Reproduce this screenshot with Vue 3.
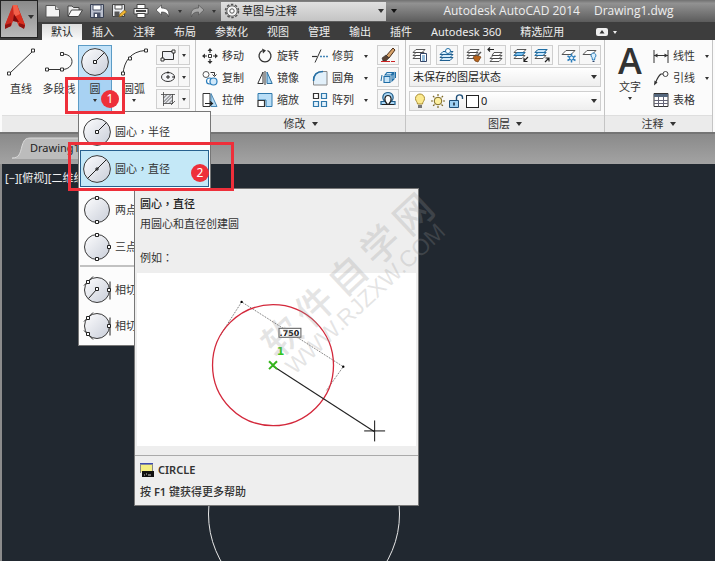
<script setup>
import { ref } from 'vue'

const quickTools = [
  { id: 'new', label: '新建' },
  { id: 'open', label: '打开' },
  { id: 'save', label: '保存' },
  { id: 'saveas', label: '另存为' },
  { id: 'print', label: '打印' }
]
const tabs = ['默认', '插入', '注释', '布局', '参数化', '视图', '管理', '输出', '插件', 'Autodesk 360', '精选应用']
const activeTab = ref('默认')

const smallDraw = [
  { id: 'rect', label: '矩形' },
  { id: 'ellipse', label: '椭圆' },
  { id: 'hatch', label: '图案填充' }
]
const modify = [
  { id: 'move', label: '移动' },
  { id: 'rotate', label: '旋转' },
  { id: 'trim', label: '修剪', more: true },
  { id: 'copy', label: '复制' },
  { id: 'mirror', label: '镜像' },
  { id: 'fillet', label: '圆角', more: true },
  { id: 'stretch', label: '拉伸' },
  { id: 'scale', label: '缩放' },
  { id: 'array', label: '阵列', more: true }
]
const modifySide = [
  { id: 'erase', label: '删除' },
  { id: 'explode', label: '分解' },
  { id: 'offset', label: '偏移' }
]
const layerGroups = [['layerprops'], ['layerstate'], ['layermatch', 'layerprev'], ['layeriso', 'layeruniso'], ['layerfreeze', 'layeroff']]
const annotate = [
  { id: 'linear', label: '线性', more: true },
  { id: 'leader', label: '引线', more: true },
  { id: 'table', label: '表格' }
]
const circleMenu = [
  { id: 'c-radius', head: '圆心', tail: '半径' },
  { id: 'c-diameter', head: '圆心', tail: '直径', selected: true },
  { id: 'c-two', head: '两点', gap: true },
  { id: 'c-three', head: '三点' },
  { id: 'c-ttr', head: '相切', tail: '相切', rule: true },
  { id: 'c-ttt', head: '相切', tail: '相切' }
]
</script>

<template>
  <div class="app">
    <svg class="defs" width="0" height="0" aria-hidden="true">
      <defs>
        <linearGradient id="ball" x1="0" y1="0" x2="1" y2="1">
          <stop offset="0" stop-color="#fdfdfe" />
          <stop offset="1" stop-color="#c9ced9" />
        </linearGradient>
        <linearGradient id="red" x1="0" y1="0" x2="1" y2="1">
          <stop offset="0" stop-color="#f0503c" />
          <stop offset="1" stop-color="#a80f10" />
        </linearGradient>
      </defs>
      <symbol id="new" viewBox="0 0 16 16">
        <path d="M1 2.500h9.500l4 4V14H1z" fill="#f4f4f4" stroke="#555" />
        <path d="M10.500 2.500v4h4" fill="#ccc" stroke="#666" />
      </symbol>
      <symbol id="open" viewBox="0 0 16 16">
        <path d="M1 13V3h4l1.500 1.500H12V7" fill="#ececec" stroke="#444" />
        <path d="M1 13.500L4.500 7H15.500L11.500 13.500z" fill="#fafafa" stroke="#444" />
      </symbol>
      <symbol id="save" viewBox="0 0 16 16">
        <path d="M1.500 1.500h13v13h-13z" fill="#b9bfcd" stroke="#384052" />
        <path d="M4 2h8v5H4z" fill="#fff" stroke="#4a5268" />
        <path d="M4.500 9.500h7V14h-7z" fill="#4a5268" /><path d="M6 11h2v3H6z" fill="#fff" />
      </symbol>
      <symbol id="saveas" viewBox="0 0 16 16">
        <path d="M1.500 1.500h12v12h-12z" fill="#e6e8ec" stroke="#444" />
        <path d="M4 2h7v4H4z" fill="#fff" stroke="#555" />
        <path d="M3.500 8.500h5v5h-5z" fill="#555" />
        <path d="M8 14l1-3 4.500-4 2 2-4.500 4z" fill="#f2b632" stroke="#7a5a1a" stroke-width=".7" />
      </symbol>
      <symbol id="print" viewBox="0 0 16 16">
        <path d="M4 1.500h8V6H4z" fill="#fff" stroke="#444" />
        <path d="M1 5.500h14V11H1z" fill="#f1f1f1" stroke="#444" />
        <path d="M3 8h10" stroke="#444" stroke-width="2" />
        <path d="M4 10.500h8v4H4z" fill="#fff" stroke="#444" />
      </symbol>
      <symbol id="undo" viewBox="0 0 16 16">
        <path d="M1 7l5.500-5v3C12 5 15 8 13.500 14 13 10.500 10.500 9 6.500 9v3z" fill="#fff" stroke="#444" stroke-width=".7" />
      </symbol>
      <symbol id="redo" viewBox="0 0 16 16">
        <path d="M15 7L9.500 2v3C4 5 1 8 2.500 14 3 10.500 5.500 9 9.500 9v3z" fill="#a9a9a9" stroke="#555" stroke-width=".7" />
      </symbol>
      <symbol id="gear" viewBox="0 0 16 16">
        <circle cx="8" cy="8" r="6.500" fill="none" stroke="#555" stroke-width="1.600" stroke-dasharray="2.500 1.600" />
        <circle cx="8" cy="8" r="5.200" fill="#f5f5f5" stroke="#555" stroke-width=".9" />
        <circle cx="8" cy="8" r="2.200" fill="#fff" stroke="#555" />
      </symbol>
      <symbol id="line" viewBox="0 0 28 28">
        <path d="M2.500 25.500L26.500 2.500" stroke="#333" />
        <path d="M1 24h3v3H1zM25 1h3v3h-3z" transform="translate(-.5 0)" fill="#fff" stroke="#333" />
      </symbol>
      <symbol id="pline" viewBox="0 0 28 28">
        <path d="M2 21.500H17C23 21.500 27 18 27 13.500S23 6 17 6" fill="none" stroke="#333" />
        <path d="M.5 20h3v3h-3zM15.500 20h3v3h-3zM15.500 4.500h3v3h-3z" fill="#fff" stroke="#333" />
      </symbol>
      <symbol id="c-radius" viewBox="0 0 28 28">
        <circle cx="14" cy="14" r="13.400" fill="url(#ball)" stroke="#3a3a3a" />
        <path d="M14 14L23.500 4.500" stroke="#222" /><path d="M12.500 12.500h3v3h-3z" fill="#fff" stroke="#222" />
      </symbol>
      <symbol id="c-diameter" viewBox="0 0 28 28">
        <circle cx="14" cy="14" r="13.400" fill="url(#ball)" stroke="#3a3a3a" />
        <path d="M4.500 23.500L23.500 4.500M12 14h4M14 12v4" stroke="#222" />
      </symbol>
      <symbol id="c-two" viewBox="0 0 28 28">
        <circle cx="14" cy="14" r="12.500" fill="url(#ball)" stroke="#3a3a3a" />
        <path d="M12.500 .5h3v3h-3zM12.500 24.500h3v3h-3z" fill="#fff" stroke="#222" />
      </symbol>
      <symbol id="c-three" viewBox="0 0 28 28">
        <circle cx="14" cy="14" r="12.500" fill="url(#ball)" stroke="#3a3a3a" />
        <path d="M12.500 .5h3v3h-3zM12.500 24.500h3v3h-3zM24.500 12.500h3v3h-3z" fill="#fff" stroke="#222" />
      </symbol>
      <symbol id="c-ttr" viewBox="0 0 28 28">
        <circle cx="14" cy="14" r="12.500" fill="url(#ball)" stroke="#3a3a3a" />
        <path d="M1 9.500L10 .5M27 5.500v18M14 13L5.500 22.500" stroke="#222" />
        <path d="M12.500 11.500h3v3h-3zM3.500 4.500h3v3h-3zM24.500 12.500h3v3h-3z" fill="#fff" stroke="#222" />
      </symbol>
      <symbol id="c-ttt" viewBox="0 0 28 28">
        <circle cx="14" cy="14" r="12.500" fill="url(#ball)" stroke="#3a3a3a" />
        <path d="M1 9.500L10 .5M27 5.500v18M1 18.500l9 9" stroke="#222" />
        <path d="M3.500 4.500h3v3h-3zM3.500 20.500h3v3h-3zM24.500 12.500h3v3h-3z" fill="#fff" stroke="#222" />
      </symbol>
      <symbol id="arc" viewBox="0 0 28 28">
        <path d="M3 26C4 13 11 3.500 25 2.500" fill="none" stroke="#333" />
        <path d="M1.500 24h3v3h-3zM8.500 9h3v3h-3zM24.500 1h3v3h-3z" fill="#fff" stroke="#333" />
      </symbol>
      <symbol id="rect" viewBox="0 0 16 16">
        <path d="M2.500 4.500h11v8h-11z" fill="#eef0f4" stroke="#333" />
        <path d="M1 11h3v3H1zM12 3h3v3h-3z" fill="#fff" stroke="#333" />
      </symbol>
      <symbol id="ellipse" viewBox="0 0 16 16">
        <ellipse cx="8" cy="8" rx="6.500" ry="4.500" fill="#f4f5f8" stroke="#333" />
        <path d="M6 8h4M8 6v4M12 8h3" stroke="#222" /><circle cx="8" cy="3.500" r="1" fill="#222" />
      </symbol>
      <symbol id="hatch" viewBox="0 0 16 16">
        <path d="M3.500 3.500h9v9h-9z" fill="#e3e5ea" />
        <path d="M1 3.500h14M3.500 1v14M12.500 3v10M3 12.500h10M3.500 7l3.500-3.500M3.500 11L11 3.500M5 12.500l7.500-7.500M9 12.500l3.500-3.500M11 14l4-4" stroke="#444" stroke-width=".8" />
      </symbol>
      <symbol id="move" viewBox="0 0 16 16">
        <path d="M8 1v4M8 11v4M1 8h4M11 8h4" stroke="#333" stroke-width="1.200" />
        <path d="M8 0l2.500 3h-5zM8 16l2.500-3h-5zM0 8l3-2.500v5zM16 8l-3-2.500v5z" fill="#333" />
        <path d="M6.500 6.500h3v3h-3z" fill="#fff" stroke="#333" />
      </symbol>
      <symbol id="rotate" viewBox="0 0 16 16">
        <path d="M5.500 2.500A6 6 0 1 0 10.500 2.500" fill="none" stroke="#333" stroke-width="1.300" />
        <path d="M5 .5l4 2-3 3z" fill="#333" />
      </symbol>
      <symbol id="trim" viewBox="0 0 16 16">
        <path d="M0 8.500h5" stroke="#333" stroke-width="1.200" /><path d="M3 14.500L9 1.500" stroke="#333" />
        <path d="M8 8.500h8" stroke="#4486b8" stroke-width="1.300" stroke-dasharray="2 1" />
      </symbol>
      <symbol id="copy" viewBox="0 0 16 16">
        <circle cx="4" cy="4.500" r="3" fill="#fff" stroke="#555" />
        <circle cx="7.500" cy="11" r="3" fill="#fff" stroke="#2b7dbb" stroke-width="1.200" />
        <circle cx="11.500" cy="11.500" r="3.500" fill="#cfe8fa" stroke="#2b7dbb" stroke-width="1.200" />
        <path d="M8.500 2.500h4v3M10.500 4.500l2 2 2-2" fill="none" stroke="#333" />
      </symbol>
      <symbol id="mirror" viewBox="0 0 16 16">
        <path d="M6 2v11.500H.8z" fill="#fff" stroke="#333" /><path d="M10 2v11.500h5.200z" fill="#a8d6f4" stroke="#2b6f9f" /><path d="M8 1v14" stroke="#333" />
      </symbol>
      <symbol id="fillet" viewBox="0 0 16 16">
        <path d="M1.500 15V10C1.500 5 5 1.500 10 1.500h5V15z" fill="#e2f0fa" stroke="#888" />
        <path d="M1.500 11C1.500 5 5 1.500 11 1.500" fill="none" stroke="#236fa6" stroke-width="1.500" />
      </symbol>
      <symbol id="stretch" viewBox="0 0 16 16">
        <path d="M1 1.500h7v13H1z" fill="#fff" stroke="#333" /><path d="M9 1.500l6 13H9z" fill="#b7dcf5" stroke="#4a88b5" /><path d="M3 11.500h7M8 9.500l2.500 2-2.500 2" fill="none" stroke="#222" stroke-width="1.200" />
      </symbol>
      <symbol id="scale" viewBox="0 0 16 16">
        <path d="M1 1.500h14v13H9V8H1z" fill="#b9def7" stroke="#2f78ab" /><path d="M1 8.500h6.500v6H1z" fill="#fff" stroke="#333" stroke-width="1.200" />
      </symbol>
      <symbol id="array" viewBox="0 0 16 16">
        <path d="M1.500 1.500h5v5h-5z" fill="#fff" stroke="#333" stroke-width="1.200" />
        <path d="M9.500 1.500h5v5h-5zM1.500 9.500h5v5h-5zM9.500 9.500h5v5h-5z" fill="#e3f2fc" stroke="#2f78ab" stroke-width="1.200" />
      </symbol>
      <symbol id="erase" viewBox="0 0 16 16">
        <path d="M6 9L13 1l2 2-6 8z" fill="#d9a46a" stroke="#4a2d18" /><path d="M2 11l4-3 3 3-3 3H3z" fill="#5a4334" stroke="#333" stroke-width=".6" />
        <path d="M1 14.500h14" stroke="#c22" stroke-dasharray="9 1" />
      </symbol>
      <symbol id="explode" viewBox="0 0 16 16">
        <path d="M4 7.500h6v6H4zM5 6l2-2.500h6L11 6zM12 6.500l2-2.500v6l-2 2z" fill="#c7e4f8" stroke="#1d6ca5" stroke-width="1.100" /><path d="M2 6l-1 6M15.500 3v6" stroke="#1d6ca5" />
      </symbol>
      <symbol id="offset" viewBox="0 0 16 16">
        <path d="M1 13.500v-3h4C1 7 3 1.500 8 1.500S15 7 11 10.500h4v3z" fill="#a9d6f5" stroke="#215f8c" stroke-width="1.200" />
        <path d="M2 13.500h5.500C3 9 5 4.500 8 4.500S13 9 8.500 13.500H14" fill="#fff" stroke="#222" stroke-width="1.200" />
      </symbol>
      <symbol id="sheets" viewBox="0 0 16 16">
        <path d="M1 11.500l3-3h8l-3 3zM1 8.500l3-3h8l-3 3zM1 5.500l3-3h9l-3 3z" fill="#fff" stroke="#444" stroke-width=".9" />
      </symbol>
      <symbol id="layerprops" viewBox="0 0 16 16">
        <use href="#sheets" /><path d="M8.500 6.500h6v8h-6z" fill="#fff" stroke="#346" /><path d="M10 9h3M10 11h3M10 13h3" stroke="#2b7dbb" />
      </symbol>
      <symbol id="layerstate" viewBox="0 0 16 16">
        <path d="M1 13.500l3-3h10l-3 3zM1 10.500l3-3h10l-3 3zM1 7.500l3-3h10l-3 3z" fill="#d6ecfa" stroke="#1f5f90" /><circle cx="9" cy="4" r="2.500" fill="#fff" stroke="#1f6ea5" />
      </symbol>
      <symbol id="layermatch" viewBox="0 0 16 16">
        <use href="#sheets" /><path d="M7 10l4-2 4 2-3 5-3-1z" fill="#b9651d" stroke="#6c3b13" stroke-width=".7" /><path d="M11 9l4-4" stroke="#555" stroke-width="1.500" />
      </symbol>
      <symbol id="layerprev" viewBox="0 0 16 16">
        <path d="M3 14.500l3-3h9l-3 3zM3 11.500l3-3h9l-3 3zM5 8.500l2-3h8l-3 3z" fill="#fff" stroke="#444" stroke-width=".9" /><path d="M7 2.500H1M3 .5l-2 2 2 2" fill="none" stroke="#222" stroke-width="1.200" />
      </symbol>
      <symbol id="layeriso" viewBox="0 0 16 16">
        <use href="#sheets" /><path d="M1 8.500l3-3h8l-3 3z" fill="#7fc1ee" stroke="#1f6ea5" /><path d="M15 10l-4 4M11 11v3.500h3.500" fill="none" stroke="#222" stroke-width="1.200" />
      </symbol>
      <symbol id="layeruniso" viewBox="0 0 16 16">
        <use href="#sheets" /><path d="M1 5.500l3-3h9l-3 3zM1 8.500l3-3h8l-3 3z" fill="#cbe6f9" stroke="#1f6ea5" /><path d="M11 15l4-4M11.500 11H15v3.500" fill="none" stroke="#222" stroke-width="1.200" />
      </symbol>
      <symbol id="layerfreeze" viewBox="0 0 16 16">
        <path d="M1 7.500l4-4h9l-4 4z" fill="#fff" stroke="#555" /><path d="M10.500 6.500v9M6.500 9l8 4.500M6.500 13.500l8-4.500" stroke="#2b7dbb" stroke-width="1.500" />
        <circle cx="10.500" cy="11" r="2" fill="#eaf6ff" stroke="#2b7dbb" />
      </symbol>
      <symbol id="layeroff" viewBox="0 0 16 16">
        <path d="M1 7.500l4-4h9l-4 4z" fill="#fff" stroke="#555" /><path d="M9 9a2.500 2.500 0 1 1 4 1.500L12.500 13h-2L10 10.500z" fill="#d8eefc" stroke="#2b7dbb" /><path d="M10.500 14.500h2" stroke="#346" />
      </symbol>
      <symbol id="bulb" viewBox="0 0 16 16">
        <path d="M5.500 11C5.500 9 3.500 8 3.500 5.500a4.500 4.500 0 0 1 9 0C12.500 8 10.500 9 10.500 11z" fill="#fbe98e" stroke="#a98d32" /><path d="M6 12h4v3H6z" fill="#777" />
      </symbol>
      <symbol id="sun" viewBox="0 0 16 16">
        <path d="M8 1v14M1 8h14M3 3l10 10M13 3L3 13" stroke="#7c6824" stroke-width="1.200" stroke-dasharray="2 1" /><circle cx="8" cy="8" r="3.800" fill="#fdf0a0" stroke="#7c6824" />
      </symbol>
      <symbol id="lock" viewBox="0 0 16 16">
        <path d="M8.500 7V4.500C8.500 1 14.500 1 14.500 4.500V6" fill="none" stroke="#1f4f78" stroke-width="1.400" /><path d="M1.500 7.500h9v7h-9z" fill="#9ed0f2" stroke="#1f4f78" /><path d="M6 9.500v3" stroke="#123" stroke-width="1.500" />
      </symbol>
      <symbol id="linear" viewBox="0 0 16 16">
        <path d="M1 2v13M15 2v13M1 7.500h14" stroke="#333" /><path d="M1 7.500l3.500-2v4zM15 7.500l-3.500-2v4z" fill="#333" />
      </symbol>
      <symbol id="leader" viewBox="0 0 16 16">
        <circle cx="12.500" cy="4" r="2.500" fill="#fff" stroke="#444" /><path d="M10 4H8C5 6 4 9 2.500 13" fill="none" stroke="#333" stroke-width="1.200" /><path d="M1 15.500l.5-5 3 2z" fill="#333" />
      </symbol>
      <symbol id="table" viewBox="0 0 16 16">
        <path d="M1 1.500h14v13H1z" fill="#fff" stroke="#333" /><path d="M1 2h14v3H1z" fill="#55677d" /><path d="M1 8.500h14M1 11.500h14M5.500 5v9.500M10.500 5v9.500" stroke="#667" />
      </symbol>
    </svg>

    <header class="header">
      <button class="logo" aria-label="应用程序菜单">
        <svg class="logo-mark" viewBox="0 0 22 26">
          <path d="M9 1h4l8 20-1 3-5-2-2-4-4-1-2 5-6 2v-3z" fill="url(#red)" />
          <path d="M9 1l1 9-3 12-6 2v-3z" fill="#cb2a20" />
          <path d="M13 1l8 20-1 3-5-2-5-12z" fill="#d9301f" />
          <path d="M9 1h4l3 9-6 3z" fill="#f2604a" />
          <path d="M10 10l5 8-6-1z" fill="#7d0b0c" />
          <path d="M15 19l6 2-1 4-5-3zM1 21l6-2v3l-6 3z" fill="#8f1211" />
        </svg>
        <i class="caret"></i>
      </button>
      <div class="titlebar">
        <nav class="quick" aria-label="快速访问">
          <button v-for="t in quickTools" :key="t.id" class="bare quick-btn" :aria-label="t.label">
            <svg class="ic16"><use :href="'#' + t.id" /></svg>
          </button>
          <button class="bare quick-btn" aria-label="放弃"><svg class="ic16"><use href="#undo" /></svg></button>
          <i class="caret small"></i>
          <button class="bare quick-btn" aria-label="重做"><svg class="ic16"><use href="#redo" /></svg></button>
          <i class="caret small"></i>
        </nav>
        <div class="workspace">
          <svg class="ic16"><use href="#gear" /></svg>
          <select aria-label="工作空间"><option>草图与注释</option></select>
          <i class="caret"></i>
        </div>
        <button class="bare custom" aria-label="自定义"><i class="caret black"></i></button>
        <div class="title"><span>Autodesk AutoCAD 2014</span><span>Drawing1.dwg</span></div>
      </div>
      <nav class="tabs" aria-label="功能区">
        <button v-for="t in tabs" :key="t" class="tab" :class="{ active: t === activeTab }" @click="activeTab = t">{{ t }}</button>
        <button class="bare minimize" aria-label="最小化"><svg viewBox="0 0 12 8"><rect width="12" height="8" rx="2" fill="#eee" /><path d="M6 2l2.500 3.500h-5z" fill="#333" /></svg><i class="caret small light"></i></button>
      </nav>
    </header>

    <section class="ribbon">
      <div class="panel draw">
        <div class="panel-body">
          <button class="big"><span class="big-icon"><svg><use href="#line" /></svg></span><span class="big-label">直线</span></button>
          <button class="big"><span class="big-icon"><svg><use href="#pline" /></svg></span><span class="big-label">多段线</span></button>
          <button class="big circle"><span class="big-icon"><svg><use href="#c-radius" /></svg></span><span class="big-label">圆<i class="caret small"></i></span></button>
          <button class="big arc"><span class="big-icon"><svg><use href="#arc" /></svg></span><span class="big-label">圆弧<i class="caret small"></i></span></button>
          <div class="stack">
            <button v-for="s in smallDraw" :key="s.id" class="split" :aria-label="s.label">
              <span><svg class="ic16"><use :href="'#' + s.id" /></svg></span><span><i class="caret small"></i></span>
            </button>
          </div>
        </div>
        <div class="panel-title"></div>
      </div>

      <div class="panel modify">
        <div class="panel-body">
          <div class="tools">
            <button v-for="m in modify" :key="m.id" class="tool"><svg class="ic16"><use :href="'#' + m.id" /></svg>{{ m.label }}<i v-if="m.more" class="caret small"></i></button>
          </div>
          <div class="stack">
            <button v-for="m in modifySide" :key="m.id" class="boxed" :aria-label="m.label"><svg class="ic16"><use :href="'#' + m.id" /></svg></button>
          </div>
        </div>
        <div class="panel-title">修改<i class="caret"></i></div>
      </div>

      <div class="panel layers">
        <div class="panel-body">
          <div class="layer-row">
            <div v-for="(g, i) in layerGroups" :key="i" class="group">
              <button v-for="id in g" :key="id" class="boxed" :aria-label="id"><svg class="ic16"><use :href="'#' + id" /></svg></button>
            </div>
          </div>
          <div class="combo">
            <select aria-label="图层状态"><option>未保存的图层状态</option></select><i class="caret"></i>
          </div>
          <div class="combo current">
            <svg class="ic16"><use href="#bulb" /></svg><svg class="ic16"><use href="#sun" /></svg><svg class="ic16"><use href="#lock" /></svg>
            <i class="swatch"></i>
            <select aria-label="当前图层"><option>0</option></select><i class="caret"></i>
          </div>
        </div>
        <div class="panel-title">图层<i class="caret"></i></div>
      </div>

      <div class="panel annotate">
        <div class="panel-body">
          <button class="big text"><span class="letter">A</span><span class="big-label">文字<i class="caret small"></i></span></button>
          <div class="tools">
            <button v-for="a in annotate" :key="a.id" class="tool"><svg class="ic16"><use :href="'#' + a.id" /></svg>{{ a.label }}<i v-if="a.more" class="caret small"></i></button>
          </div>
        </div>
        <div class="panel-title">注释<i class="caret"></i></div>
      </div>
    </section>

    <div class="files"><button class="file-tab"><svg viewBox="0 0 104 22" preserveAspectRatio="none"><path d="M0 21C7 21 8 17 10 9 12 3 13 1 19 1H104V22H0z" fill="#bcbcbc" /><path d="M0 21C7 21 8 17 10 9 12 3 13 1 19 1H104" fill="none" stroke="#d9d9d9" /></svg><span>Drawing1</span></button></div>

    <main class="canvas">
      <span class="view-label">[−][俯视][二维线框]</span>
      <svg class="drawn" viewBox="0 0 194 194"><circle cx="97" cy="97" r="95.500" fill="none" stroke="#e8e8e8" /></svg>
    </main>

    <div class="menu" role="menu">
      <button v-for="c in circleMenu" :key="c.id" role="menuitem" class="menu-item" :class="{ selected: c.selected, gap: c.gap, rule: c.rule }">
        <svg><use :href="'#' + c.id" /></svg><span>{{ c.head }}<span v-if="c.tail" class="punct">，</span>{{ c.tail }}</span>
      </button>
    </div>

    <aside class="tip" role="tooltip">
      <div class="tip-head">
        <strong>圆心<span class="punct">，</span>直径</strong>
        <p>用圆心和直径创建圆</p>
        <p class="example">例如<span class="punct">：</span></p>
      </div>
      <svg class="tip-image" viewBox="0 0 280 174">
        <path d="M84 62L105 29M207 94L190 118" stroke="#666" stroke-dasharray="1 1" />
        <path d="M105 29L207 94" stroke="#666" stroke-dasharray="1 1" />
        <circle cx="136.500" cy="92.500" r="60.700" fill="none" stroke="#d3283b" stroke-width="1.300" />
        <circle cx="105" cy="29" r="1.200" /><circle cx="207" cy="94" r="1.200" />
        <path d="M136 93L238 159" stroke="#222" stroke-width="1.100" />
        <path d="M238.500 148v21M228 158.500h21" stroke="#111" />
        <path d="M132.500 88.500l8 8M140.500 88.500l-8 8" stroke="#35b51c" stroke-width="2" />
        <rect x="142.500" y="55.500" width="22" height="9" fill="#fff" stroke="#555" />
        <text x="153" y="63" class="dim">.750</text>
        <text x="144" y="82" class="num">1</text>
      </svg>
      <div class="tip-foot">
        <strong class="cmd"><svg viewBox="0 0 14 14"><rect width="13" height="9" fill="#f4ee83" /><path d="M0 .8h13" stroke="#3d4bb0" stroke-width="1.600" /><path d="M.5 1v9M12.500 1v8" stroke="#888" /><rect x="2" y="8" width="12" height="6" fill="#111" /><path d="M4 12h1M6 11h1M8 12h3" stroke="#ccc" /></svg>CIRCLE</strong>
        <strong>按 <b>F1</b> 键获得更多帮助</strong>
      </div>
    </aside>

    <div class="watermark" aria-hidden="true">
      <div class="wm-name"><span>软</span><span>件</span><span>自</span><span>学</span><span>网</span></div>
      <div class="wm-url">WWW.RJZXW.COM</div>
    </div>

    <div class="mark first"><b>1</b></div>
    <div class="mark second"><b>2</b></div>
  </div>
</template>

<style>
body { background: #212830; }
</style>

<style scoped>
* { box-sizing: border-box; }
.app {
  position: relative;
  display: flex;
  flex-direction: column;
  min-height: 100vh;
  overflow: hidden;
  font: 11px/16px "Noto Sans", "Noto Sans CJK SC", sans-serif;
  color: #333;
  background: #212830;
}
.defs { position: absolute; }
button, select { font: inherit; color: inherit; }
button, .bare { border: 0; padding: 0; margin: 0; background: none; }
svg { display: block; flex: none; overflow: visible; }
.ic16 { width: 16px; height: 16px; }
.punct { font-family: "Noto Sans CJK TC", sans-serif; }
.caret {
  flex: none;
  width: 0;
  height: 0;
  border: 3px solid transparent;
  border-top: 4px solid #333;
  border-bottom: 0;
}
.caret.small { border-width: 3px 2px 0; }
.caret.black { border-top-color: #111; }
.caret.light { border-top-color: #eee; }

.header {
  display: grid;
  grid-template-columns: 40px 1fr;
  grid-template-rows: 22px 18px;
  background: #3d3d3d;
}
.titlebar {
  display: flex;
  align-items: center;
  grid-column: 1 / 3;
  grid-row: 1;
  padding-left: 42px;
  background: linear-gradient(#717171, #929292 15%, #5c5c5c);
}
.logo {
  z-index: 1;
  grid-column: 1;
  grid-row: 1 / 3;
  display: flex;
  align-items: center;
  justify-content: center;
  gap: 2px;
  width: 38px;
  height: 38px;
  padding-bottom: 4px;
  border: 1px solid #222;
  background: linear-gradient(#8a8a8a, #b9b9b9);
}
.logo-mark { width: 22px; height: 26px; }
.quick { display: flex; align-items: center; width: 179px; }
.quick-btn { display: grid; place-items: center; width: 22px; height: 20px; }
.quick .caret.small { margin: 0 4px; }
.workspace {
  display: flex;
  align-items: center;
  gap: 2px;
  width: 165px;
  height: 19px;
  padding: 0 2px 0 3px;
  background: linear-gradient(#e0e0e0, #c4c4c4);
}
.workspace select, .combo select {
  flex: 1;
  min-width: 0;
  height: 18px;
  padding: 0;
  border: 0;
  appearance: none;
  background: none;
  color: #222;
}
.custom { width: 16px; display: grid; place-items: center; }
.title {
  flex: 1;
  display: flex;
  justify-content: center;
  gap: 14px;
  color: #eee;
  font-size: 12px;
  font-family: "Open Sans", sans-serif;
}
.tabs {
  display: flex;
  align-items: flex-end;
  gap: 1px;
  grid-column: 2;
  grid-row: 2;
  padding-left: 2px;
  color: #eee;
}
.tab { height: 16px; padding: 0 9px; white-space: nowrap; }
.tab.active { background: linear-gradient(#dcdcdc, #fafafa); color: #222; }
.minimize { display: flex; align-items: center; gap: 5px; height: 16px; margin-left: 22px; }
.minimize svg { width: 12px; height: 8px; }

.ribbon {
  display: flex;
  padding: 0 2px;
  border-bottom: 2px solid #747474;
  background: #fbfbfb;
}
.panel { display: flex; flex-direction: column; flex: none; border-right: 1px solid #c4c4c4; }
.draw { width: 194px; }
.modify { width: 210px; }
.layers { width: 199px; }
.annotate { flex: 1; }
.panel-body { display: flex; height: 75px; padding-top: 5px; }
.panel-title {
  display: flex;
  align-items: center;
  justify-content: center;
  gap: 6px;
  height: 17px;
  background: #ebebeb;
  border-top: 1px solid #dedede;
}
.big { display: flex; flex-direction: column; width: 38px; height: 67px; }
.big.arc { width: 44px; }
.big.circle { width: 34px; border: 1px solid #5b9bc6; background: #c3e2f8; }
.big-icon { display: grid; place-items: center; width: 100%; height: 34px; }
.big-icon svg { width: 28px; height: 28px; }
.big-label {
  display: flex;
  flex-direction: column;
  align-items: center;
  width: 100%;
  padding-top: 2px;
  gap: 2px;
  white-space: nowrap;
}
.circle .big-icon { height: 32px; }
.circle .big-label { flex: 1; border-top: 1px solid #5b9bc6; background: #a8d2f3; }
.stack { display: flex; flex-direction: column; gap: 2px; }
.split, .boxed { display: flex; height: 20px; border: 1px solid #cfcfcf; background: #f7f7f7; }
.stack .split { width: 34px; }
.split span { display: grid; place-items: center; flex: 1; height: 18px; }
.split span:last-child { flex: 0 0 11px; border-left: 1px solid #cfcfcf; }
.boxed { width: 22px; align-items: center; justify-content: center; }
.tools { display: grid; grid-auto-rows: 22px; }
.modify .tools { grid-template-columns: 55px 55px 65px; padding-left: 6px; }
.annotate .tools { flex: 1; }
.tool { display: flex; align-items: center; gap: 4px; white-space: nowrap; }
.tool .caret { margin-left: 6px; }
.layers .panel-body { flex-direction: column; gap: 2px; padding: 5px 3px 0; }
.layer-row { display: flex; justify-content: space-between; }
.group { display: flex; }
.group .boxed + .boxed { margin-left: -1px; }
.combo {
  display: flex;
  align-items: center;
  height: 20px;
  padding: 0 3px;
  border: 1px solid #cfcfcf;
  background: linear-gradient(#fff, #eee);
}
.current { gap: 2px; margin-top: 2px; padding-left: 2px; }
.current .swatch { width: 13px; height: 13px; border: 1px solid #222; background: #fff; }
.big.text { width: 46px; align-items: center; gap: 2px; }
.letter { height: 32px; font: 600 36px/32px "Open Sans", sans-serif; color: #333; }
.text .big-label { padding-top: 0; }
.annotate .panel-body { padding-left: 2px; }

.files { height: 30px; padding-top: 3px; background: linear-gradient(#8a8a8a, #a3a3a3); }
.file-tab { position: relative; display: block; width: 104px; height: 22px; margin-left: 12px; color: #222; }
.file-tab svg { width: 104px; height: 22px; }
.file-tab span { position: absolute; left: 18px; top: 3px; }
.canvas {
  position: relative;
  flex: 1;
  min-height: 397px;
  overflow: hidden;
  padding: 6px 3px;
  border-left: 2px solid #8c8c8c;
  color: #f0f0f0;
}
.drawn { position: absolute; left: 205px; top: 253px; width: 194px; height: 194px; }

.menu {
  position: absolute;
  left: 78px;
  top: 111px;
  width: 133px;
  padding: 1px;
  border: 1px solid #777;
  background: #fcfcfc;
}
.menu-item {
  display: flex;
  align-items: center;
  gap: 4px;
  width: 100%;
  height: 37px;
  padding: 0 3px;
  overflow: hidden;
  white-space: nowrap;
}
.menu-item svg { width: 28px; height: 28px; }
.menu-item.selected { border: 1px solid #27618f; background: #c4e8f7; padding: 0 2px; }
.menu-item.gap { margin-top: 4px; }
.menu-item.rule { height: 42px; padding-top: 5px; border-top: 2px solid #c2c2c2; }

.tip {
  position: absolute;
  left: 134px;
  top: 188px;
  width: 285px;
  padding: 0 2px;
  border: 1px solid #777;
  background: #eee;
}
.tip p { margin: 4px 0 0; }
.tip .example { margin-top: 17px; }
.tip-head { height: 84px; padding: 6px 3px 0; }
.tip-head strong { font-weight: 500; color: #222; }
.tip-image { width: 100%; background: #fff; }
.dim { font: bold 8px "DejaVu Sans", sans-serif; text-anchor: middle; fill: #111; }
.num { font: bold 11px "DejaVu Sans", sans-serif; text-anchor: middle; fill: #35c51c; }
.tip-foot {
  display: flex;
  flex-direction: column;
  gap: 6px;
  margin: 9px -2px 0;
  padding: 6px 5px 5px;
  border-top: 1px solid #aaa;
}
.tip-foot strong { font-weight: 500; }
.tip-foot b, .tip-foot .cmd { font-weight: 600; }
.cmd { display: flex; align-items: center; gap: 4px; }
.cmd svg { width: 14px; height: 14px; }

.watermark {
  position: absolute;
  left: 243px;
  top: 247px;
  width: 230px;
  color: rgba(150, 150, 150, .25);
  transform: rotate(-43deg);
  pointer-events: none;
}
.wm-name { display: flex; gap: 7px; font: 500 38px/40px "Noto Sans CJK SC", sans-serif; }
.wm-url { padding-left: 2px; font: 23px/22px "Liberation Sans", sans-serif; }

.mark { position: absolute; border: 3px solid #ee2f3a; pointer-events: none; }
.mark b {
  position: absolute;
  width: 18px;
  height: 18px;
  border-radius: 50%;
  background: #ee2f3a;
  color: #fff;
  font: 12px/18px "Noto Sans", sans-serif;
  text-align: center;
}
.first { left: 65px; top: 77px; width: 60px; height: 37px; }
.first b { left: 33px; top: 10px; }
.second { left: 68px; top: 142px; width: 166px; height: 49px; }
.second b { left: 120px; top: 19px; }
</style>
